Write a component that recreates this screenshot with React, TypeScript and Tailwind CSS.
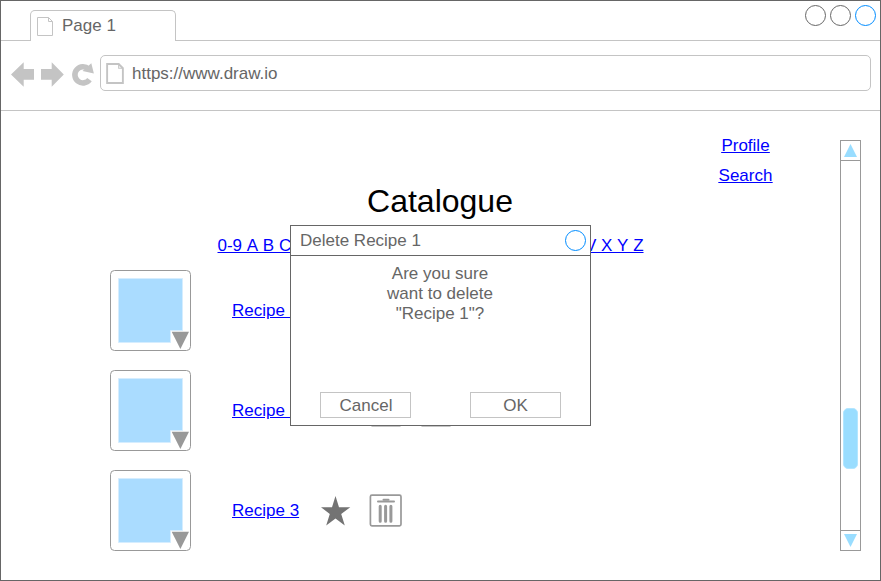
import React from "react";

const LETTERS = "0-9 A B C D E F G H I J K L M N O P Q R S T U V X Y Z";

function PageIcon({ viewBox, strokeWidth }: { viewBox: string; strokeWidth: number }) {
  return (
    <svg className="h-[21px] w-[18px]" viewBox={viewBox} fill="none" stroke="#c4c4c4" strokeWidth={strokeWidth}>
      <path d="M1.5 1.5H12.5L16.5 5.5V19.5H1.5Z" />
      <path d="M12.5 1.5V5.5H16.5" strokeWidth={1} />
    </svg>
  );
}

function Circle({ color }: { color: string }) {
  return (
    <svg className="h-[22px] w-[22px] shrink-0" viewBox="0 0 22 22" fill="#fff" stroke={color}>
      <circle cx="10.5" cy="10.5" r="10" />
    </svg>
  );
}

function NavIcons() {
  return (
    <svg className="h-[30px] w-[88px] shrink-0" viewBox="0 0 88 30" fill="#c4c4c4">
      <path d="M0 14.5L12.7 2.3V9H23V19.8H12.7V26.7Z" />
      <path d="M52.8 14.5L40.7 2.3V9H30V19.8H40.7V26.7Z" />
      <path d="M78.5 19.7A8.1 8.1 0 1 1 77.6 9" fill="none" stroke="#c4c4c4" strokeWidth="5.6" />
      <path d="M80.3 3.3L82.9 13.5L71.5 11Z" />
    </svg>
  );
}

function Thumbnail() {
  return (
    <svg className="h-[82px] w-[82px] shrink-0" viewBox="0 0 82 82">
      <rect x="0.5" y="0.5" width="80" height="80" rx="4" fill="#fff" stroke="#999" />
      <path d="M8.5 8.5H72.5V60.5H60.5V72.5H8.5Z" fill="#aadcff" stroke="#d5edff" />
      <path d="M61.7 61.8H79L70.4 79Z" fill="#999" />
    </svg>
  );
}

function Star() {
  return (
    <svg className="h-[30px] w-[30px] shrink-0" viewBox="0 0 30 30" fill="#737373">
      <path d="M14.5 0L18 11.2H29.3L20.2 18L23.8 29.5L14.5 22.6L5.2 29.5L8.8 18L0 11.2H11Z" />
    </svg>
  );
}

function Trash() {
  return (
    <svg className="h-[34px] w-[34px] shrink-0" viewBox="0 0 34 34" fill="none" stroke="#999">
      <rect x="1.4" y="1.2" width="30.6" height="30.6" rx="1.5" strokeWidth="1.7" />
      <g strokeLinecap="round">
        <path d="M9 7.4H25" strokeWidth="2" />
        <path d="M14.5 5.8H19.5" strokeWidth="2" />
        <path d="M11.2 12.3V27.2M16.6 12.3V27.2M21.9 12.3V27.2" strokeWidth="3" />
      </g>
    </svg>
  );
}

function Scrollbar() {
  return (
    <div className="mt-[29px] flex h-[411px] w-[21px] shrink-0 flex-col border border-[#999]">
      <div className="flex h-5 items-center justify-center border-b border-[#999]">
        <svg className="h-[13px] w-[13px]" viewBox="0 0 13 13" fill="#99ddff"><path d="M0 13L6.5 0L13 13Z" /></svg>
      </div>
      <div className="flex flex-1 flex-col items-center">
        <div className="mt-[247px] h-[61px] w-[15px] rounded-[5px] border border-[#b3e6ff] bg-[#99ddff]" />
      </div>
      <div className="flex h-5 items-center justify-center border-t border-[#999]">
        <svg className="h-[13px] w-[13px]" viewBox="0 0 13 13" fill="#99ddff"><path d="M0 0L6.5 13L13 0Z" /></svg>
      </div>
    </div>
  );
}

function RecipeRow({ name, children }: { name: string; children?: React.ReactNode }) {
  return (
    <div className="flex h-[81px] items-start">
      <Thumbnail />
      <a className="ml-10 mt-[31px] w-[89px] whitespace-nowrap leading-5 text-[#0000ff] underline">{name}</a>
      {children}
    </div>
  );
}

function Dialog() {
  return (
    <div className="absolute left-[289px] top-[224px] flex h-[201px] w-[301px] flex-col border border-[#666] bg-white text-[#666]">
      <div className="flex h-[30px] shrink-0 justify-between border-b border-[#666] pl-[9px] pr-[3px] pt-1">
        <span className="leading-[21px]">Delete Recipe 1</span>
        <Circle color="#008cff" />
      </div>
      <p className="mt-2 pr-px text-center leading-5">
        Are you sure<br />want to delete<br />"Recipe 1"?
      </p>
      <div className="mb-[7px] mt-auto flex justify-between px-[29px]">
        <button className="h-[26px] w-[91px] border border-[#c4c4c4] pl-px pt-px leading-[23px]">Cancel</button>
        <button className="h-[26px] w-[91px] border border-[#c4c4c4] pt-px leading-[23px]">OK</button>
      </div>
    </div>
  );
}

export default function App() {
  return (
    <div className="relative flex h-[581px] w-[881px] flex-col overflow-hidden border border-[#666] bg-white font-['Liberation_Sans',Arial,sans-serif] text-[17px]">
      <header className="flex h-10 shrink-0 items-end">
        <div className="w-[29px] border-b border-[#c4c4c4]" />
        <div className="flex h-[31px] w-[146px] rounded-t-[5px] border border-b-0 border-[#c4c4c4] pl-[5px] pt-[5px] text-[#666]">
          <PageIcon viewBox="0 0 18 21" strokeWidth={1} />
          <span className="ml-2 leading-5">Page 1</span>
        </div>
        <div className="flex h-10 flex-1 justify-end gap-[3px] border-b border-[#c4c4c4] pr-[3px] pt-1">
          <Circle color="#666" />
          <Circle color="#666" />
          <Circle color="#008cff" />
        </div>
      </header>
      <div className="flex h-[70px] shrink-0 items-start border-b border-[#c4c4c4] pl-[10px] pt-[14px]">
        <div className="mt-[5px] flex"><NavIcons /></div>
        <div className="ml-px flex h-9 w-[771px] items-start rounded-[5px] border border-[#c4c4c4] pl-[5px] pt-[7px] text-[#666]">
          <PageIcon viewBox="0.5 0.5 17 20" strokeWidth={1.8} />
          <span className="ml-2 mt-px leading-5">https://www.draw.io</span>
        </div>
      </div>
      <div className="flex flex-1">
        <main className="flex w-[839px] shrink-0 flex-col pt-5">
          <nav className="ml-[704px] flex w-[81px] flex-col items-center leading-[30px] text-[#0000ff] underline">
            <a>Profile</a>
            <a>Search</a>
          </nav>
          <h1 className="-mt-px w-[878px] text-center text-[32px] leading-[22px] text-black">Catalogue</h1>
          <a className="ml-[216.5px] mt-6 whitespace-nowrap leading-5 text-[#0000ff] underline [font-kerning:none]">{LETTERS}</a>
          <div className="ml-[109px] mt-[14px] flex flex-col gap-[19px]">
            <RecipeRow name="Recipe 1" />
            <RecipeRow name="Recipe 2">
              <div className="mt-[25px] flex gap-5 pl-[50px]">
                <div className="h-8 w-[30px] rounded-[1px] border border-[#c4c4c4]" />
                <div className="h-8 w-[30px] rounded-[1px] border border-[#c4c4c4]" />
              </div>
            </RecipeRow>
            <RecipeRow name="Recipe 3">
              <div className="mt-[26px]"><Star /></div>
              <div className="ml-[18px] mt-6"><Trash /></div>
            </RecipeRow>
          </div>
        </main>
        <Scrollbar />
      </div>
      <Dialog />
    </div>
  );
}
